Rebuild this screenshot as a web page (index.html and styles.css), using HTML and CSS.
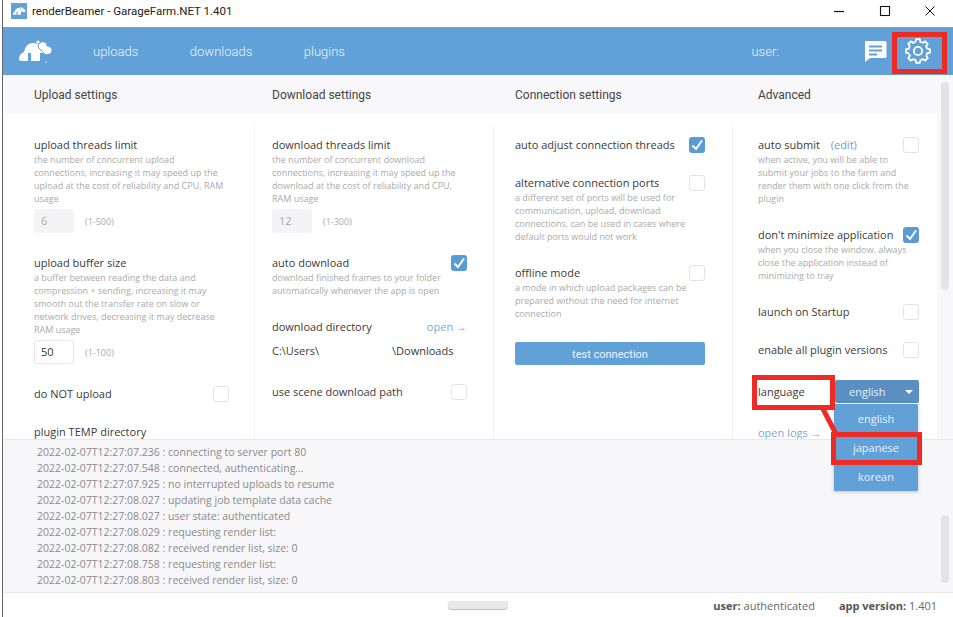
FILE: index.html
```html
<!DOCTYPE html>
<html lang="en">
<head>
<meta charset="utf-8">
<title>renderBeamer - GarageFarm.NET 1.401</title>
<link rel="stylesheet" href="styles.css">
</head>
<body>
<svg class="defs" width="0" height="0" aria-hidden="true">
  <defs>
    <symbol id="logo" viewBox="0 0 34 24">
      <path d="M0 20c0-3 2-6 5-7 1-5 4-9 9-9 3 0 5 1 7 3l6 7h-6v8h-9v-8H9v8H2c-1-.5-2-1-2-2z" fill="#fff"/>
      <circle cx="19" cy="3" r="1.6" fill="#fff"/>
      <path d="M19 8c0-3 3-6 6-5 2 .5 3 2 3 4 3 0 5 2 5 4.500 0 2.500-2 4-4.500 4H26z" fill="#fff" stroke="#62a1d8" stroke-width="1"/>
      <circle cx="27" cy="23" r=".7" fill="#fff"/>
    </symbol>
    <path id="gear-seg" d="M9.800 3.600 10.400 1h3.200l.6 2.600A8.700 8.700 0 0 1 16.380 4.510"/>
  </defs>
</svg>

<div class="window">
  <div class="titlebar">
    <span class="title-icon"><svg width="13" height="10"><use href="#logo"/></svg></span>
    <span class="title-text">renderBeamer - GarageFarm.NET 1.401</span>
    <div class="win-controls">
      <svg class="win-btn" width="12" height="12" viewBox="0 0 12 12"><path d="M1 6.500h10" stroke="#111" stroke-width="1.200"/></svg>
      <svg class="win-btn" width="12" height="12" viewBox="0 0 12 12"><rect x="1.500" y="1.500" width="9" height="9" fill="none" stroke="#111" stroke-width="1.100"/></svg>
      <svg class="win-btn" width="12" height="12" viewBox="0 0 12 12"><path d="M1.500 1.500l9 9M10.500 1.500l-9 9" stroke="#111" stroke-width="1"/></svg>
    </div>
  </div>

  <header class="appbar">
    <svg class="logo" width="34" height="24"><use href="#logo"/></svg>
    <nav class="tabs">
      <span class="tab">uploads</span>
      <span class="tab">downloads</span>
      <span class="tab">plugins</span>
    </nav>
    <span class="user">user:</span>
    <svg class="chat" width="23" height="21" viewBox="0 0 23 21">
      <path d="M2 0h19a1.500 1.500 0 0 1 1.500 1.500v14A1.500 1.500 0 0 1 21 17H6l-5 4V1a1 1 0 0 1 1-1z" fill="#fff"/>
      <path d="M5 4.500h13v2H5zM5 8.500h13v2H5zM5 12.500h8v2H5z" fill="#62a1d8"/>
    </svg>
    <div class="gear-box">
      <svg class="gear" width="26" height="26" viewBox="0 0 24 24" fill="none" stroke="#fff" stroke-width="1.700">
        <use href="#gear-seg"/>
        <use href="#gear-seg" transform="rotate(45 12 12)"/>
        <use href="#gear-seg" transform="rotate(90 12 12)"/>
        <use href="#gear-seg" transform="rotate(135 12 12)"/>
        <use href="#gear-seg" transform="rotate(180 12 12)"/>
        <use href="#gear-seg" transform="rotate(225 12 12)"/>
        <use href="#gear-seg" transform="rotate(270 12 12)"/>
        <use href="#gear-seg" transform="rotate(315 12 12)"/>
        <circle cx="12" cy="12" r="3.800"/>
      </svg>
    </div>
  </header>

  <section class="settings">
    <div class="settings-body">
      <div class="heads">
        <h2 class="head h1">Upload settings</h2>
        <h2 class="head h2">Download settings</h2>
        <h2 class="head h3">Connection settings</h2>
        <h2 class="head h4">Advanced</h2>
      </div>
      <div class="cols">
        <div class="col c1">
          <div class="setting">
            <div class="label">upload threads limit</div>
            <p class="desc">the number of concurrent upload connections, increasing it may speed up the upload at the cost of reliability and CPU, RAM usage</p>
            <div class="numrow"><span class="num disabled">6</span><span class="range">(1-500)</span></div>
          </div>
          <div class="setting nudge">
            <div class="label">upload buffer size</div>
            <p class="desc">a buffer between reading the data and compression + sending, increasing it may smooth out the transfer rate on slow or network drives, decreasing it may decrease RAM usage</p>
            <div class="numrow"><span class="num">50</span><span class="range">(1-100)</span></div>
          </div>
          <div class="setting row nudge">
            <div class="label">do NOT upload</div><span class="box"></span>
          </div>
          <div class="setting">
            <div class="label">plugin TEMP directory</div>
          </div>
        </div>

        <div class="col c2">
          <div class="setting">
            <div class="label">download threads limit</div>
            <p class="desc">the number of concurrent download connections, increasing it may speed up the download at the cost of reliability and CPU, RAM usage</p>
            <div class="numrow"><span class="num disabled">12</span><span class="range">(1-300)</span></div>
          </div>
          <div class="setting nudge">
            <div class="row">
              <div class="label">auto download</div>
              <span class="box on"><svg width="16" height="16" viewBox="0 0 16 16"><path d="M3.500 8.500 7 12l6-8.500" fill="none" stroke="#fff" stroke-width="2"/></svg></span>
            </div>
            <p class="desc">download finished frames to your folder automatically whenever the app is open</p>
          </div>
          <div class="setting">
            <div class="row">
              <div class="label">download directory</div>
              <span class="link">open →</span>
            </div>
            <div class="path"><span>C:\Users\</span><span>\Downloads</span></div>
          </div>
          <div class="setting row scene">
            <div class="label">use scene download path</div><span class="box"></span>
          </div>
        </div>

        <div class="col c3">
          <div class="setting row">
            <div class="label">auto adjust connection threads</div>
            <span class="box on"><svg width="16" height="16" viewBox="0 0 16 16"><path d="M3.500 8.500 7 12l6-8.500" fill="none" stroke="#fff" stroke-width="2"/></svg></span>
          </div>
          <div class="setting">
            <div class="row">
              <div class="label">alternative connection ports</div><span class="box"></span>
            </div>
            <p class="desc">a different set of ports will be used for communication, upload, download connections, can be used in cases where default ports would not work</p>
          </div>
          <div class="setting">
            <div class="row">
              <div class="label">offline mode</div><span class="box"></span>
            </div>
            <p class="desc">a mode in which upload packages can be prepared without the need for internet connection</p>
          </div>
          <div class="test-btn">test connection</div>
        </div>

        <div class="col c4">
          <div class="setting">
            <div class="row">
              <div class="label">auto submit <span class="edit">(edit)</span></div><span class="box"></span>
            </div>
            <p class="desc">when active, you will be able to submit your jobs to the farm and render them with one click from the plugin</p>
          </div>
          <div class="setting">
            <div class="row">
              <div class="label">don't minimize application</div>
              <span class="box on"><svg width="16" height="16" viewBox="0 0 16 16"><path d="M3.500 8.500 7 12l6-8.500" fill="none" stroke="#fff" stroke-width="2"/></svg></span>
            </div>
            <p class="desc">when you close the window, always close the application instead of minimizing to tray</p>
          </div>
          <div class="setting row">
            <div class="label">launch on Startup</div><span class="box"></span>
          </div>
          <div class="setting row">
            <div class="label">enable all plugin versions</div><span class="box"></span>
          </div>
          <div class="setting row lang">
            <div class="label">language</div>
            <div class="select">
              <span>english</span><i class="caret"></i>
              <div class="menu">
                <div class="item">english</div>
                <div class="item">japanese</div>
                <div class="item">korean</div>
              </div>
            </div>
          </div>
          <div class="setting logs"><span class="link">open logs →</span></div>
        </div>
      </div>
    </div>
    <div class="strip"><div class="thumb thumb-top"></div></div>
  </section>

  <section class="log">
    <div class="log-lines">
      <div>2022-02-07T12:27:07.236 : connecting to server port 80</div>
      <div>2022-02-07T12:27:07.548 : connected, authenticating...</div>
      <div>2022-02-07T12:27:07.925 : no interrupted uploads to resume</div>
      <div>2022-02-07T12:27:08.027 : updating job template data cache</div>
      <div>2022-02-07T12:27:08.027 : user state: authenticated</div>
      <div>2022-02-07T12:27:08.029 : requesting render list:</div>
      <div>2022-02-07T12:27:08.082 : received render list, size: 0</div>
      <div>2022-02-07T12:27:08.758 : requesting render list:</div>
      <div>2022-02-07T12:27:08.803 : received render list, size: 0</div>
    </div>
    <div class="strip"><div class="thumb thumb-log"></div></div>
  </section>

  <footer class="status">
    <span class="handle"></span>
    <span class="stat"><b>user:</b> authenticated</span>
    <span class="stat"><b>app version:</b> 1.401</span>
  </footer>

  <div class="mark mark-gear"></div>
  <div class="mark mark-lang"><span>language</span></div>
  <svg class="mark-line" width="20" height="30" viewBox="0 0 20 30"><path d="M2 0 16 27" stroke="#ee2a24" stroke-width="5"/></svg>
  <div class="mark mark-jp"></div>
</div>
</body>
</html>
```

FILE: styles.css
```css
* { box-sizing: border-box; }
html, body { margin: 0; height: 100%; overflow: hidden; background: #fff; }
body { font-family: "Open Sans", "Noto Sans", sans-serif; color: #333; }
.defs { position: absolute; }

.window {
  position: relative;
  height: 617px;
  margin-left: 2px;
  border-left: 1px solid #666;
  display: flex;
  flex-direction: column;
  background: #fff;
}

/* title bar */
.titlebar { height: 27px; flex: none; display: flex; align-items: center; padding: 0 0 5px 8px; background: #fff; }
.title-icon { width: 16px; height: 16px; background: #62a1d8; display: flex; align-items: center; justify-content: center; margin-right: 5px; }
.title-text { font: 400 11.500px/16px Roboto, sans-serif; color: #222; }
.win-controls { margin-left: auto; display: flex; gap: 33.500px; padding-right: 17px; }
.win-btn { display: block; }

/* app bar */
.appbar { height: 48px; flex: none; background: #62a1d8; display: flex; align-items: center; padding-left: 16px; color: #e8f1fa; font-family: Roboto, sans-serif; }
.logo { flex: none; }
.tabs { display: flex; gap: 51.500px; margin-left: 40px; font-size: 13px; font-weight: 300; }
.user { margin-left: auto; font-size: 13px; font-weight: 300; }
.chat { margin-left: 85px; flex: none; }
.gear-box { width: 55px; height: 42px; margin: 10px 6px 0 5px; display: flex; align-items: center; justify-content: center; padding: 0 3px 11px 0; }
.gear { flex: none; }

/* settings */
.settings { height: 364px; flex: none; display: flex; }
.settings-body { flex: 1; min-width: 0; display: flex; flex-direction: column; background: #fff; }
.heads { height: 38px; flex: none; display: flex; background: #f8f7f9; align-items: center; padding-top: 2px; }
.head { margin: 0; font: 400 12px/18px Roboto, sans-serif; color: #444; }
.h1 { margin-left: 31px; width: 238px; }
.h2 { width: 243px; }
.h3 { width: 243px; }

.cols { flex: 1; min-height: 0; display: flex; padding-top: 13px; }
.col { display: flex; flex-direction: column; gap: 20px; padding-top: 10px; border-right: 1px solid #f0f0f2; }
.c1 { width: 252px; padding-left: 31px; padding-right: 25px; overflow: hidden; }
.c2 { width: 239px; padding-left: 17px; padding-right: 26px; overflow: hidden; }
.c3 { width: 239px; padding-left: 21px; padding-right: 27px; overflow: hidden; }
.c4 { width: 204px; padding-left: 25px; padding-right: 18px; border-right: 0; }

.setting { flex: none; }
.nudge { margin-top: 1px; }
.row { display: flex; align-items: center; justify-content: space-between; }
.label { font-size: 11px; line-height: 18px; color: #3a3a3a; white-space: nowrap; }
.desc { margin: -1px 0 0; padding-bottom: 1px; font-size: 9px; line-height: 13px; color: #aaa; }
.box { width: 16px; height: 16px; flex: none; border: 1px solid #e4e4e8; border-radius: 3px; background: #fff; }
.box.on { background: #5b9bd5; border: 0; }
.box svg { display: block; }
.numrow { display: flex; align-items: center; margin-top: 3px; }
.num { width: 40px; height: 24px; border: 1px solid #e6e6e9; border-radius: 3px; font-size: 11px; line-height: 22px; padding-left: 6px; color: #333; }
.num.disabled { background: #f4f4f6; border-color: #f4f4f6; color: #aaa; }
.range { margin-left: 11px; font-size: 9px; color: #aaa; }
.link { display: block; font-size: 11px; line-height: 18px; color: #7da9cc; }
.edit { color: #6f9fc8; margin-left: 8px; }
.path { display: flex; gap: 73px; margin-top: 6px; font-size: 11px; line-height: 18px; color: #3a3a3a; }
.scene { margin-top: 3px; }
.test-btn { height: 23px; flex: none; margin-top: 1px; border-radius: 2px; background: #62a1d8; color: #e8f1fa; font: 400 11px/25px Roboto, sans-serif; text-align: center; }

.lang { margin-top: 1px; }
.select { position: relative; width: 84px; height: 23px; background: #5b8ec2; border-radius: 2px; color: #e8f1fa; font-size: 11px; line-height: 23px; padding-left: 14px; }
.caret { position: absolute; right: 6px; top: 10px; border: 4px solid transparent; border-top: 4px solid #fff; border-bottom: 0; }
.menu { position: absolute; left: -1px; top: 24px; width: 84px; background: #62a1d8; box-shadow: 0 1px 4px rgba(0,0,0,.2); z-index: 2; }
.item { height: 29px; line-height: 29px; text-align: center; font-size: 11px; color: #e8f1fa; }
.logs { margin-top: 1px; }

/* scrollbar strips */
.strip { width: 16px; flex: none; background: #f8f7f9; padding-left: 4px; }
.thumb { width: 8px; background: #e4e3e6; border-radius: 4px; }
.thumb-top { height: 208px; margin-top: 7px; }
.thumb-log { height: 68px; margin-top: 75px; }

/* log */
.log { position: relative; z-index: 1; height: 154px; flex: none; display: flex; background: #f7f6f8; border-top: 1px solid #e8e8ea; border-bottom: 1px solid #e8e8ea; }
.log .strip { background: transparent; }
.log-lines { flex: 1; padding: 4px 0 0 34px; font-size: 10.500px; line-height: 16px; color: #8a8a8a; }

/* status bar */
.status { flex: 1; display: flex; align-items: center; padding: 0 16px 0 445px; font-size: 11px; color: #666; }
.handle { width: 60px; height: 8px; margin-right: auto; background: #e9e9ec; border-radius: 0 0 4px 4px; box-shadow: 0 1px 1px #bbb; }
.stat { margin-left: 24px; }
.stat b { font-weight: 700; color: #555; }

/* red annotations */
.mark { position: absolute; border: 5px solid #ee2a24; z-index: 3; }
.mark-gear { left: 889px; top: 32px; width: 55px; height: 42px; }
.mark-lang { left: 749px; top: 375px; width: 83px; height: 35px; background: #fff; padding-left: 1px; font-size: 11px; line-height: 24px; color: #3a3a3a; }
.mark-jp { left: 828px; top: 432px; width: 91px; height: 33px; }
.mark-line { position: absolute; left: 818px; top: 409px; z-index: 3; }
```
